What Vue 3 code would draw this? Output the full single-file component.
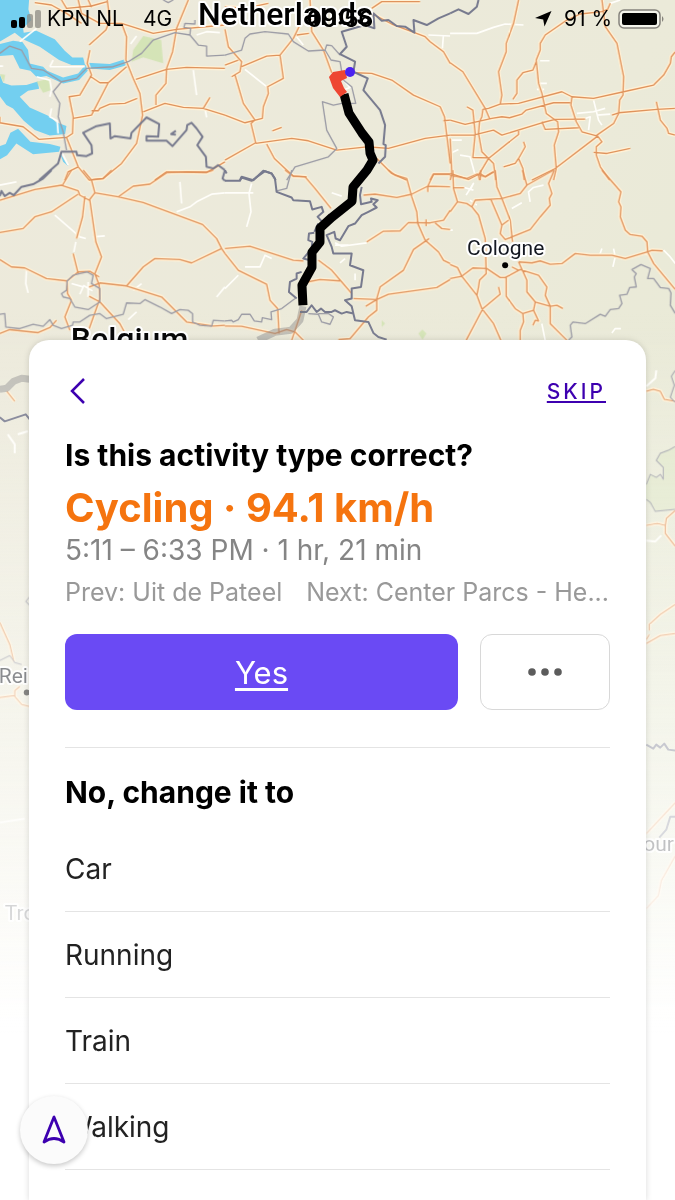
<script setup>
import { ref } from 'vue'

const alternatives = ['Car', 'Running', 'Train', 'Walking']
const chosen = ref('')

// Line work of the map, grouped in tiles. Each tile has an origin on the
// 675-unit wide map and a scale for its own finer grid.
const tiles = [
  {
    id: 'nw', at: 'translate(0 0) scale(0.33333)',
    water: 'M0 0H88L86 28 95 60 70 85 72 98 110 92 165 118 195 152 218 172 250 172 256 195 215 195 178 180 120 140 70 118 45 98 0 125Z M0 132L40 122 68 126 85 150 90 190 130 200 142 212 190 232 235 220 262 188 330 192 380 176 378 196 330 210 270 205 238 240 190 250 140 228 112 232 92 212 60 205 40 165 0 168Z M0 222L10 248 35 256 80 255 114 244 118 266 85 272 60 290 90 322 152 350 168 366 200 378 196 402 150 406 105 390 72 362 40 325 20 315 0 288Z M0 438L18 432 32 398 55 386 92 425 150 432 182 440 178 455 100 462 50 430 22 465 0 478Z M180 456L205 498 190 485Z',
    green: 'M430 108L484 120 490 190 430 172 395 185 400 150Z M110 245L150 235 155 270 130 278Z M0 222L16 224 12 248Z',
    minor: 'M0 198H10M150 200H255M60 125L110 85M160 180L150 200M110 230L150 240 155 270 150 290M155 325L150 350 172 362 175 400M580 210L590 285M410 108L392 132M185 455L205 495M615 325L620 352M590 105L620 95 660 98',
    roads: 'M105 8L155 15 200 40 245 70M185 0L200 25 275 18 322 5M322 0L330 60 318 90 268 135M270 150L262 190 275 225 240 285 208 290 220 350 218 400 200 412 118 418 70 380 0 368V350M235 0L245 40 300 70 365 70 380 110 378 180 400 235 420 280 428 345 410 430 365 490 310 535 268 540 235 500 200 412M265 0L275 22M365 70L460 100 530 88 675 75M565 0L530 85 518 155 500 205 498 250 468 285V315M380 200L325 248 275 345 220 355M325 248H300L270 228M275 332H295L300 325 330 312 375 310 412 295M408 238L500 208 560 202 675 205M430 335L495 310 550 322 610 325 675 345M610 325L630 292M235 500L205 515 195 540M465 540L500 515 620 517 675 485',
    admin: 'M0 160L30 138 65 150 95 205 130 210 185 245 160 275 180 310 175 350 190 395 200 450M185 245L230 235 260 205 340 200 385 185 425 160 460 120 525 98 570 105 595 135 620 138V168L675 165M570 105L572 85 552 82 555 70 585 72 585 60M490 0L505 8 520 0',
    border: 'M118 540L175 490 185 455H230L232 465 260 468 277 460 275 435 250 398 290 378 330 370 332 415 345 408 392 415 395 398 440 352 478 372 475 410 440 408V422H500L518 438 560 390 562 375 575 368 590 385 608 410 592 435 618 470 620 500 640 505 655 495 675 510M528 392L514 402 528 404'
  },
  {
    id: 'n', at: 'translate(225 0) scale(0.33333)',
    water: '', green: '',
    minor: 'M60 208L128 262M215 110L235 135M610 105L675 108M655 105L652 145M355 240L375 262 355 270',
    roads: 'M0 88L10 140 50 185 45 215 20 230M30 225L55 310 90 360 78 370 92 428 0 480M0 195L40 180M50 200L125 168 165 165 205 115 222 80 215 0M165 165L175 235 128 260 130 280 115 320 112 355 60 368 0 345M255 0L260 95 295 150 320 218M92 430L200 415 250 422 335 450 425 440 490 445 600 415 675 405M125 432L148 475 205 528 245 530M390 218L440 220 500 240 565 285 645 320 658 350 675 490M410 25L500 72 600 110 615 125 655 155 675 190M440 25L470 5 585 5M215 105L252 100M142 392L170 382M455 475L500 520 545 540M615 540L625 522H675M655 362L675 360M0 20L60 25 130 10',
    admin: 'M0 165L50 150 60 115 75 102 120 95 190 102 205 125 250 153 300 150 305 135 320 137 345 165M300 150L318 180 345 185 350 215M355 240L380 260 392 310 350 310 325 315 292 305 305 390 335 445 310 470 210 500 185 540',
    border: 'M675 40L640 55 605 75 565 60 568 98 540 80 515 78 490 60 470 62 445 40 448 85 420 75 350 95 365 140 345 162 390 185 385 215 428 235 415 270 465 330 480 375 475 432 482 435 480 470 460 490M0 510L5 520M45 540L50 530 85 540 115 512 140 520 152 540'
  },
  {
    id: 'ne', at: 'translate(450 0) scale(0.33333)',
    water: '', green: '',
    minor: 'M0 100L80 100 130 82 165 72 220 75M270 182H298M265 250H290M260 268H282M380 340L430 335 465 325M405 355L420 350 415 390M430 300L445 360 455 375M440 345L480 342M30 465L60 470 75 525M0 460L25 448M0 420H35M480 10L510 0',
    roads: 'M205 0L190 70 168 130V155L145 215 155 285 150 312 115 325 98 328 95 350 88 365 85 400 95 455 130 490 137 540M0 188L38 215 105 325 118 355M350 60L285 105 270 130V150L258 180 265 250 275 280 288 340 322 365 325 395 312 435 318 505 310 540M258 185L248 210 218 218 200 240V280L188 298M150 312L205 310 335 275 365 290 430 295 520 275 610 255 640 225 660 190 663 170 675 155M455 0L465 80 500 130 520 230 518 285 508 300 505 340 490 370 440 405 455 425 438 440V465L450 500 478 540M350 60L390 42 455 35 472 28 480 10M485 345L505 338 620 328 675 325M618 305L630 360 650 385 655 400 675 405M0 360L45 373 125 355 155 350 178 353 215 342 228 330 310 308H360M365 290L362 315 378 365 395 395 442 408 315 505 245 540M0 405H70L130 390 155 405 275 368 315 358 405 357M275 365L285 388 385 383M50 320L68 330 75 400 68 472 115 473M205 393V403L115 475 85 525 88 540M0 415L5 520 0 540M0 520L55 538 90 520 105 530 130 515M160 500L195 490 205 475 225 440 220 425M205 475L218 505 222 540M430 457L470 460 540 445',
    admin: '', border: 'M0 40L25 28 55 42 80 20 85 0'
  },
  {
    id: 'w', at: 'translate(0 170) scale(0.33333)',
    water: '', green: '',
    minor: 'M0 45L50 35M165 135L240 200 258 205M540 35L545 100M675 68L635 72 590 95 570 110 530 125M280 200L315 197M228 215L222 245M80 300L78 340 85 368M675 350L650 380M425 340L400 360M215 340L250 350 240 372M250 345L278 362M265 335V380M410 425L385 448',
    roads: 'M215 0L188 45M0 90L105 58 185 45 235 62 240 75 268 90 285 68 275 30 250 0M278 28L310 25 335 0M285 68L355 80 430 97 608 163 650 205 665 235 675 250M355 80L400 48 450 42 500 8 560 5 620 6 640 0M0 187L70 175 105 140 155 125 235 72M255 78L248 140 230 205M220 250L235 310M270 90L288 215 305 260 285 310 298 345 300 385 268 475M0 268L35 290 75 293 140 325 202 332 203 370 215 390 195 440 210 480M268 350L300 338 380 347 485 380 560 455 640 467 675 465M380 347L430 290 465 265 540 268 575 278 665 235M268 378L300 395 360 460 375 488M0 490L30 478 115 487 150 472 170 450M202 332L235 305 270 303 298 320',
    admin: 'M0 432L15 430 18 470 60 475 100 462 130 468 150 448 160 465 185 475 218 465 220 455 240 455 270 435 300 430 320 445 370 432 380 398 420 400 435 388 480 410 515 430 540 418 565 420 578 430V455L600 465 635 468 640 450 675 452M202 332L200 360 185 370 190 380 210 385 225 410 265 418 300 395 300 355 275 340 280 315 262 305 240 310 220 315Z',
    border: 'M0 78L5 62 15 78 30 68 42 75 65 50 100 42 130 25 155 0M675 32L668 25 675 0'
  },
  {
    id: 'mid', at: 'translate(225 170) scale(0.33333)',
    water: '', green: 'M580 490L592 478 604 490 592 508Z M470 450L480 460 470 470Z',
    minor: 'M0 68H85M80 40L72 70 78 125 65 170M330 218L350 228 425 218M0 355L40 315M60 290H105L120 255 140 265M360 265L345 278M390 330V310M320 68L350 78M330 225H370',
    roads: 'M180 0L205 18 240 20 270 55 318 115M0 235L75 228 205 270 235 272M280 270L320 300 350 335 380 370M0 250L40 300 125 342 135 390 158 415 162 490M248 335L285 328 345 332M0 467L50 468 150 490 185 478 210 485 235 510M230 420L200 510M490 0L510 15 545 25 560 80 575 125 578 160 600 210 640 245 655 270 675 280M415 75L450 72 515 82 560 72 608 48 675 50M608 65V48L625 12H675M425 215L475 183 525 182 550 157 615 158 655 150 675 120M630 158L650 175 675 178M603 148V168M612 205L565 238 535 300 465 350 455 385 455 420 430 440 375 505 340 508M385 385L455 388 490 372 635 352 675 328M455 388L422 408',
    admin: 'M0 452L20 450 25 455 40 448 50 432 75 432 88 452 110 455 112 442 140 448 138 425 170 415 210 385M250 430L280 432 290 455 315 462 325 440 310 430 280 430M200 0L185 55 155 62',
    border: 'M0 32L45 32 50 22 80 32 120 3 140 10 150 25 155 65 200 82 205 90 255 93 262 118 290 110 295 125 278 140 292 155M410 50L405 75 408 102 440 95 438 85 458 90 445 102 455 112 430 125 410 135 390 160 370 168 345 210 332 205 328 185 305 195 320 230 325 250H380L375 285 415 300 408 350 380 355V385L360 390 380 408 385 430 365 425 350 430 330 420 320 425 300 425 288 415 275 425 260 405 245 425 225 425M280 160L268 185M268 188L252 190 250 210 262 215 260 235 235 265 255 270M230 305L215 310 215 325 195 335 192 365 215 385M385 430L390 450 430 455 445 488 460 500 485 508'
  },
  {
    id: 'e', at: 'translate(450 170) scale(0.33333)',
    water: '', green: '',
    minor: 'M0 180H8M185 115L215 98M280 45L250 52 235 65 240 95M48 75L70 40 60 60M60 90L80 105M455 235L448 255M490 235L495 260 488 290M640 240L660 260 675 280M485 488L495 475 512 475M275 460L285 510M70 60L42 52',
    roads: 'M0 283L22 292 35 318 80 375 95 415 130 460 152 510M0 325L35 318 68 293 110 295 150 322 165 322 210 298 265 315 290 350 285 375 300 408 300 460 350 510M8 0L10 55 22 95 0 125M10 53H42M22 95L50 100 65 110 85 135 105 205 108 310 88 330 85 350 80 375M145 350L150 372 98 415 48 510M65 110L75 90 155 85 210 70 230 45 310 0M135 0L140 50 155 85 180 150 187 215M122 88L155 165 150 190 165 208 240 178 270 140 300 105 297 85 305 70 295 40 312 0M155 165L175 150M217 0L230 45M205 275L245 278 270 272 300 282 335 280 375 250 420 255 485 255 525 265 592 245 605 240 637 242M455 0L512 65 505 95 512 110 510 140 525 180 540 193 575 198 590 215 592 245 610 280 675 358M168 322V378L195 415 218 430 250 420 255 395 230 365V330L205 275M185 290L205 300M218 430L220 455 210 480V510M255 395L300 408 320 405 338 415M250 420L265 452 255 450 248 465M0 15L50 25 80 12 105 20 130 5M90 30L92 0',
    admin: 'M355 510L365 500 360 465 368 455 405 460 450 432 465 438 480 418 505 415 515 400 508 375 530 372 538 352 558 350 552 320 558 310 545 298 572 283 600 295 592 325 610 325 630 352 655 355 662 368 660 405 675 430',
    border: ''
  },
  {
    id: 'south', at: 'translate(0 0) scale(1)', sparse: true,
    water: '', green: 'M646 484L650 474 663 479 663 467 656 460 660 453 675 446V509L655 511 646 499Z',
    minor: 'M8 434L15 444V453M18 434L28 431M646 386L655 378 656 370M646 540L655 541 661 535M0 822L25 818',
    roads: 'M7 391L15 401M0 622L10 644 14 661M0 697L15 695M20 686L15 690V696L22 704 30 706M646 391L653 389 660 391 664 399 675 401M646 525L657 523 665 525 666 518 675 510M665 525V533L675 546M646 643L660 635 675 633M649 630V624L660 614 675 604M646 833L675 802M646 908L658 895 661 880 675 855M646 639L649 634',
    admin: 'M0 660L10 655 15 662 22 664M30 596L26 601 30 605M675 370L671 376 674 385 670 397 675 402M646 484L650 474 656 477 660 474 663 479V467L656 460 660 453 668 450 675 446M646 499L650 502 655 511 675 509',
    border: 'M0 417L5 421 26 414 30 419M646 744L653 748 656 744 660 747 664 743 668 749 675 750M659 837L666 829 670 816H675'
  }
]
const layers = ['water', 'green', 'minor', 'halo', 'roads', 'admin', 'border']
const shape = (tile, layer) => tile[layer === 'halo' ? 'roads' : layer]
</script>

<template>
  <main class="screen">
    <svg class="map" viewBox="0 0 675 1200" preserveAspectRatio="xMidYMin slice" role="img" aria-label="Route map">
      <defs>
        <linearGradient id="land" x1="0" y1="0" x2="1" y2="1">
          <stop offset="0" stop-color="#edeadc" />
          <stop offset="0.5" stop-color="#ebead9" />
          <stop offset="1" stop-color="#e6ead3" />
        </linearGradient>
        <linearGradient id="fade" x1="0" y1="0" x2="0" y2="1">
          <stop offset="0.26" stop-color="#fff" stop-opacity="0" />
          <stop offset="0.56" stop-color="#fdfdfb" stop-opacity="0.5" />
          <stop offset="0.86" stop-color="#fff" stop-opacity="1" />
        </linearGradient>
      </defs>
      <rect width="675" height="1200" fill="url(#land)" />
      <g v-for="layer in layers" :key="layer" :class="layer">
        <g v-for="tile in tiles" :key="tile.id" :transform="tile.at" :class="{ sparse: tile.sparse }">
          <path v-if="shape(tile, layer)" :d="shape(tile, layer)" />
        </g>
      </g>
      <path class="old-route" d="M303 306L300 320 291 330 275 332 258 340M0 389L7 388 14 381 22 378 30 379" />
      <g class="place">
        <text x="198" y="25" class="country">Netherlands</text>
        <text x="71" y="350" class="country">Belgium</text>
        <text x="467" y="255" class="city">Cologne</text>
        <text x="-1" y="682" class="city">Rei</text>
        <text x="5" y="919" class="city">Tro</text>
        <text x="643" y="850" class="city">our</text>
      </g>
      <circle cx="505" cy="265" r="3" />
      <circle cx="27" cy="692" r="3" />
      <path class="route" d="M344 94L349 113 362 133 369 142 370 153 373 160 367 170 353 187 352 201 332 217 320 228 320 242 312 252 312 267 302 285 303 305" />
      <path fill="#ee4632" d="M329 77L333 72 345 70 347 78 341 81 344 88 347 92 340 97 333 88Z" />
      <circle cx="350" cy="72" r="5" fill="#4b22f0" />
      <rect width="675" height="1200" fill="url(#fade)" />
    </svg>

    <header class="status">
      <div class="carrier">
        <svg width="31" height="18" viewBox="0 0 31 18" aria-hidden="true">
          <rect x="0" y="10" width="6" height="8" rx="2" />
          <rect x="8" y="7" width="6" height="11" rx="2" />
          <rect x="16" y="4" width="6" height="14" rx="2" fill="#8e8b84" opacity="0.75" />
          <rect x="24" y="0" width="6" height="18" rx="2" fill="#8e8b84" opacity="0.75" />
        </svg>
        <span>KPN NL</span>
        <span class="network">4G</span>
      </div>
      <time class="clock">09:56</time>
      <div class="power">
        <svg width="17" height="16" viewBox="0 0 17 16" aria-hidden="true">
          <path d="M16.500 0L9.500 15.500 8.200 8.400 0 7Z" />
        </svg>
        <span>91 %</span>
        <svg class="battery" width="47" height="21" viewBox="0 0 47 21" aria-hidden="true">
          <rect x="1" y="1" width="41" height="18" rx="5" fill="#fff" fill-opacity="0.5" stroke="#85827c" stroke-width="1.500" />
          <rect x="4" y="4" width="35" height="12" rx="2" />
          <path d="M44 7Q47 10 44 13Z" fill="#85827c" />
        </svg>
      </div>
    </header>

    <section class="card">
      <nav class="top">
        <button class="back" type="button" aria-label="Back">
          <svg width="16" height="28" viewBox="0 0 16 28" aria-hidden="true">
            <path d="M15 2L3 14L15 26" fill="none" stroke="#3d00b0" stroke-width="2.500" />
          </svg>
        </button>
        <a class="skip" href="#skip">SKIP</a>
      </nav>

      <h1>Is this activity type correct?</h1>
      <p class="activity">Cycling · 94.1 km/h</p>
      <p class="time">5:11 – 6:33 PM · 1 hr, 21 min</p>
      <div class="around">
        <span>Prev: Uit de Pateel</span>
        <span>Next: Center Parcs - He...</span>
      </div>

      <div class="actions">
        <button class="yes" type="button">Yes</button>
        <button class="more" type="button" aria-label="More options">
          <svg width="34" height="8" viewBox="0 0 34 8" fill="#5c5c5c" aria-hidden="true">
            <circle cx="4" cy="4" r="3.800" />
            <circle cx="17" cy="4" r="3.800" />
            <circle cx="30" cy="4" r="3.800" />
          </svg>
        </button>
      </div>

      <h2>No, change it to</h2>
      <ul class="options">
        <li v-for="name in alternatives" :key="name">
          <button type="button" :aria-pressed="chosen === name" @click="chosen = name">{{ name }}</button>
        </li>
      </ul>
    </section>

    <button class="locate" type="button" aria-label="Centre the map on my location">
      <svg width="24" height="30" viewBox="0 0 24 30" aria-hidden="true">
        <path d="M12 2L2 27Q12 20 22 27Z" fill="none" stroke="#3d00b0" stroke-width="2.800" stroke-linejoin="round" />
      </svg>
    </button>
  </main>
</template>

<style>
body {
  margin: 0;
}
</style>

<style scoped>
.screen {
  position: relative;
  display: flex;
  flex-direction: column;
  min-height: 100vh;
  overflow: hidden;
  background: #fff;
  color: #000;
  font-family: Inter, "Liberation Sans", sans-serif;
}

.map {
  position: absolute;
  inset: 0;
  width: 100%;
  height: 100%;
}
.map path {
  stroke-linejoin: round;
}
.water { fill: #73cff0; }
.green { fill: #cfe3ae; opacity: 0.8; }
.minor, .halo, .roads, .admin, .border { fill: none; }
.minor { stroke: #fffefa; stroke-width: 5; }
.halo { stroke: #fff1d6; stroke-width: 12; }
.roads { stroke: #e0935c; stroke-width: 4; }
.admin { stroke: #9b9ba5; stroke-width: 4; }
.border { stroke: #777a8e; stroke-width: 6; }
.sparse { stroke-width: 2; }
.roads .sparse, .admin .sparse { stroke-width: 1; }
.halo .sparse { stroke-width: 4; }
.green .sparse { opacity: 0.4; }
.old-route {
  fill: none;
  stroke: #77777d;
  stroke-opacity: 0.4;
  stroke-width: 7;
}
.route {
  fill: none;
  stroke: #000;
  stroke-width: 9;
}
.place {
  font-family: Roboto, "Liberation Sans", sans-serif;
  fill: #141821;
  stroke: #fff;
  stroke-width: 4;
  stroke-linejoin: round;
  paint-order: stroke;
}
.country { font-size: 32px; font-weight: 500; fill: #000; }
.city { font-size: 21px; }

.status {
  position: relative;
  display: flex;
  align-items: center;
  justify-content: space-between;
  height: 38px;
  padding: 0 10px 0 11px;
  font-size: 21px;
  line-height: 38px;
}
.carrier, .power {
  display: flex;
  align-items: center;
}
.carrier { gap: 5px; }
.network { margin-left: 14px; }
.power { gap: 6px; }
.power span { margin-left: 6px; }
.clock {
  position: absolute;
  left: 0;
  right: 0;
  padding-left: 5px;
  text-align: center;
  font-size: 23px;
  font-weight: 600;
}

.card {
  position: relative;
  flex: 1;
  margin: 302px 29px 0;
  padding: 33px 36px 31px;
  border-radius: 20px 20px 0 0;
  background: #fff;
  box-shadow: 0 0 6px rgba(0, 0, 0, 0.15);
}
button {
  margin: 0;
  padding: 0;
  border: 0;
  background: none;
  color: inherit;
  font: inherit;
  cursor: pointer;
}
.top {
  display: flex;
  align-items: center;
  justify-content: space-between;
  height: 36px;
  padding: 0 4px;
}
.back { display: flex; }
.skip {
  color: #3d00b0;
  font-size: 21px;
  font-weight: 500;
  letter-spacing: 3px;
  text-underline-offset: 2px;
}
h1, h2, p, ul {
  margin: 0;
  padding: 0;
}
h1, h2 {
  font-size: 30px;
  font-weight: 700;
  line-height: 38px;
}
h1 { margin-top: 27px; }
.activity {
  margin-top: 8px;
  color: #f5740f;
  font-size: 40px;
  font-weight: 700;
  line-height: 52px;
}
.time {
  color: #858585;
  font-size: 28px;
  line-height: 32px;
}
.around {
  display: flex;
  gap: 24px;
  margin-top: 10px;
  color: #999;
  font-size: 25px;
  line-height: 32px;
  white-space: nowrap;
}
.actions {
  display: flex;
  gap: 22px;
  margin-top: 26px;
  padding-bottom: 37px;
  border-bottom: 1px solid #e4e4e4;
}
.yes, .more {
  height: 76px;
  border-radius: 12px;
}
.yes {
  flex: 1;
  background: #6a4af4;
  color: #fff;
  font-size: 31px;
  text-decoration: underline;
  text-underline-offset: 4px;
}
.more {
  display: flex;
  align-items: center;
  justify-content: center;
  width: 130px;
  border: 1px solid #d8d8d8;
}
h2 { padding: 25px 0 15px; }
.options { list-style: none; }
.options li { border-bottom: 1px solid #e4e4e4; }
.options button {
  display: block;
  width: 100%;
  height: 85px;
  color: #222;
  font-size: 28px;
  text-align: left;
}

.locate {
  position: fixed;
  left: 20px;
  bottom: 36px;
  display: flex;
  align-items: center;
  justify-content: center;
  width: 68px;
  height: 68px;
  border-radius: 50%;
  background: #fbfbfb;
  box-shadow: 0 2px 5px rgba(0, 0, 0, 0.22);
}
</style>
